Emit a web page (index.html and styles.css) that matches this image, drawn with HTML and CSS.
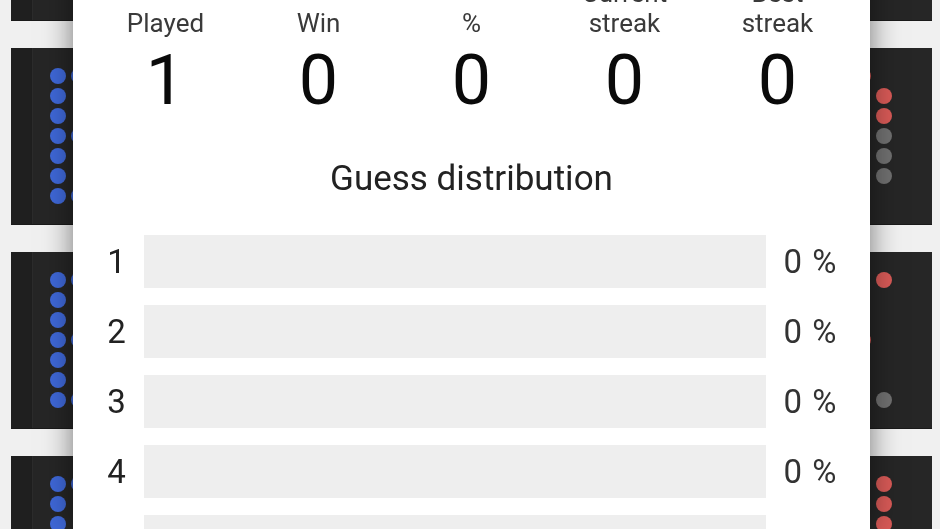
FILE: index.html
```html
<!DOCTYPE html>
<html lang="en">
<head>
<meta charset="utf-8">
<title>Statistics</title>
<link rel="stylesheet" href="styles.css">
</head>
<body>
<div class="boards">
  <div class="board-col left">
    <div class="panel"><div class="dcol"><i></i><i></i><i></i><i></i><i></i><i></i><i class="g"></i></div></div>
    <div class="panel">
      <div class="dcol"><i class="b"></i><i class="b"></i><i class="b"></i><i class="b"></i><i class="b"></i><i class="b"></i><i class="b"></i></div>
      <div class="dcol"><i class="b"></i><i></i><i></i><i class="b"></i><i></i><i></i><i class="b"></i></div>
    </div>
    <div class="panel">
      <div class="dcol"><i class="b"></i><i class="b"></i><i class="b"></i><i class="b"></i><i class="b"></i><i class="b"></i><i class="b"></i></div>
      <div class="dcol"><i class="b"></i><i></i><i></i><i class="b"></i><i></i><i></i><i class="b"></i></div>
    </div>
    <div class="panel">
      <div class="dcol"><i class="b"></i><i class="b"></i><i class="b"></i><i class="b"></i><i class="b"></i><i class="b"></i><i class="b"></i></div>
      <div class="dcol"><i class="b"></i><i></i><i></i><i class="b"></i><i></i><i></i><i class="b"></i></div>
    </div>
  </div>
  <div class="board-col right">
    <div class="panel"><div class="dcol"><i></i><i></i><i></i><i></i><i></i><i></i><i></i></div><div class="dcol"><i></i><i></i><i></i><i></i><i></i><i></i><i></i></div></div>
    <div class="panel">
      <div class="dcol"><i class="r"></i><i></i><i></i><i></i><i></i><i></i><i></i></div>
      <div class="dcol"><i></i><i class="r"></i><i class="r"></i><i class="g"></i><i class="g"></i><i class="g"></i><i></i></div>
    </div>
    <div class="panel">
      <div class="dcol"><i></i><i></i><i></i><i class="r"></i><i></i><i></i><i></i></div>
      <div class="dcol"><i class="r"></i><i></i><i></i><i></i><i></i><i></i><i class="g"></i></div>
    </div>
    <div class="panel">
      <div class="dcol"><i></i><i></i><i></i><i></i><i></i><i></i><i></i></div>
      <div class="dcol"><i class="r"></i><i class="r"></i><i class="r"></i><i></i><i></i><i></i><i></i></div>
    </div>
  </div>
</div>

<div class="modal">
  <div class="stats">
    <div class="stat"><div class="label">Played</div><div class="value">1</div></div>
    <div class="stat"><div class="label">Win</div><div class="value">0</div></div>
    <div class="stat"><div class="label">%</div><div class="value">0</div></div>
    <div class="stat"><div class="label">Current<br>streak</div><div class="value">0</div></div>
    <div class="stat"><div class="label">Best<br>streak</div><div class="value">0</div></div>
  </div>
  <h2 class="dist-title">Guess distribution</h2>
  <div class="dist">
    <div class="row"><span class="num">1</span><div class="bar"></div><span class="pct">0 %</span></div>
    <div class="row"><span class="num">2</span><div class="bar"></div><span class="pct">0 %</span></div>
    <div class="row"><span class="num">3</span><div class="bar"></div><span class="pct">0 %</span></div>
    <div class="row"><span class="num">4</span><div class="bar"></div><span class="pct">0 %</span></div>
    <div class="row"><span class="num">5</span><div class="bar"></div><span class="pct">0 %</span></div>
    <div class="row"><span class="num">6</span><div class="bar"></div><span class="pct">0 %</span></div>
  </div>
</div>
</body>
</html>
```
FILE: styles.css
```css
html, body {
  margin: 0;
  padding: 0;
  height: 100%;
  overflow: hidden;
}
body {
  background: #f0f0f0;
  font-family: Roboto, "Liberation Sans", sans-serif;
}
.boards {
  display: flex;
  justify-content: space-between;
  padding: 0 8px 0 11px;
}
.board-col {
  display: flex;
  flex-direction: column;
  gap: 27px;
  margin-top: -156px;
  width: 240px;
}
.panel {
  height: 177px;
  background: #262626;
  box-sizing: border-box;
  display: flex;
  gap: 5px;
  padding-top: 20px;
  border-bottom: 1px solid #1a1a1a;
}
.left .panel {
  padding-left: 39px;
  background: linear-gradient(to right, #1f1f1f 0, #1f1f1f 21px, #2c2c2c 21px, #2c2c2c 22px, #262626 22px);
}
.right .panel {
  justify-content: flex-end;
  padding-right: 40px;
}
.dcol {
  display: flex;
  flex-direction: column;
  gap: 4px;
}
.dcol i {
  display: block;
  width: 16px;
  height: 16px;
  border-radius: 50%;
}
.dcol i.b { background: #3f68d8; }
.dcol i.r { background: #d85a57; }
.dcol i.g { background: #707070; }

.modal {
  position: fixed;
  left: 73px;
  width: 797px;
  top: -30px;
  bottom: 0;
  background: #fff;
  box-shadow: 0 0 28px rgba(0, 0, 0, 0.5);
  box-sizing: border-box;
  padding: 8px 16px 0;
}
.stats {
  display: flex;
}
.stat {
  flex: 1;
  display: flex;
  flex-direction: column;
  align-items: center;
  justify-content: flex-end;
  text-align: center;
}
.label {
  font-size: 26px;
  line-height: 30px;
  color: #3a3a3a;
}
.value {
  font-size: 70px;
  line-height: 70px;
  margin-top: 7px;
  color: #0a0a0a;
}
.dist-title {
  margin: 43px 0 0;
  font-size: 35px;
  line-height: 42px;
  font-weight: 400;
  text-align: center;
  color: #222;
}
.dist {
  margin-top: 35px;
  display: flex;
  flex-direction: column;
  gap: 17px;
}
.row {
  display: flex;
  align-items: center;
  height: 53px;
}
.num {
  width: 55px;
  text-align: center;
  font-size: 33px;
  color: #222;
}
.bar {
  flex: 1;
  height: 53px;
  background: #eeeeee;
}
.pct {
  width: 88px;
  text-align: center;
  font-size: 33px;
  word-spacing: 2px;
  color: #333;
}
```
